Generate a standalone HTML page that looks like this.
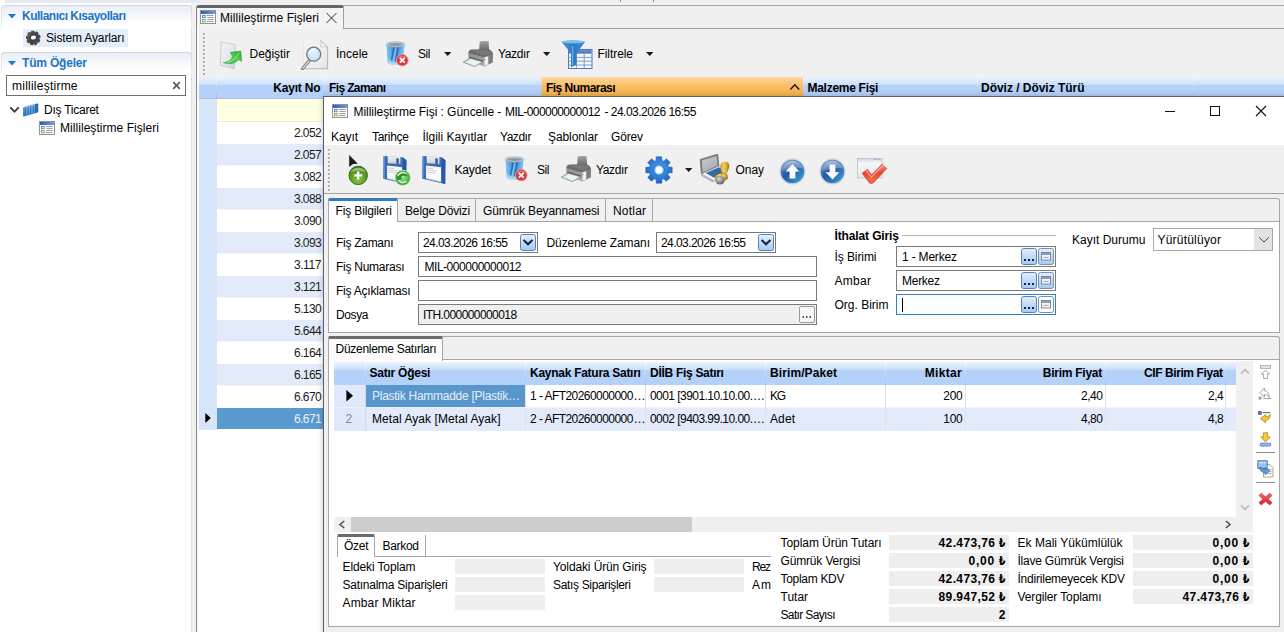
<!DOCTYPE html>
<html lang="tr">
<head>
<meta charset="utf-8">
<title>Millileştirme Fişi</title>
<style>
html,body{margin:0;padding:0}
body{width:1284px;height:632px;position:relative;overflow:hidden;background:#f0f0f0;font:12px/14px "Liberation Sans","DejaVu Sans",sans-serif;color:#000}
.a{position:absolute;display:block}
.t{position:absolute;white-space:nowrap;font:12px/14px "Liberation Sans","DejaVu Sans",sans-serif}
.b{font-weight:bold}
</style>
</head>
<body>
<div class="a" style="left:0px;top:0px;width:192px;height:632px;background:#ffffff;"></div>
<div class="a" style="left:5px;top:0px;width:196px;height:3px;background:#e5e9f0;"></div>
<div class="a" style="left:191px;top:4px;width:1px;height:628px;background:#dcdfe4;"></div>
<div class="a" style="left:1px;top:5px;width:191px;height:23px;border-radius:4px 4px 0 0;background:linear-gradient(#cdd5e2,#dfe5ee 50%,#eef1f6 100%)"></div>
<div class="a" style="left:2px;top:6px;width:189px;height:22px;border-radius:3px 3px 0 0;background:linear-gradient(#e9eef6,#f5f7fb 45%,#ffffff 80%)"></div>
<svg class="a" style="left:8px;top:14px;" width="8" height="5" viewBox="0 0 8 5"><path d="M0 0H8L4 4.4Z" fill="#1b7bd1"/></svg>
<span class="t b" style="left:22px;top:9px;color:#1c74c4;letter-spacing:-0.50px;">Kullanıcı Kısayolları</span>
<div class="a" style="left:23px;top:29px;width:105px;height:18px;background:#e4eef9;"></div>
<svg class="a" style="left:25px;top:30px;" width="17" height="16" viewBox="0 0 17 16"><defs><linearGradient id="sg1" x1="0" y1="0" x2="1" y2="1"><stop offset="0" stop-color="#6a6a6a"/><stop offset=".5" stop-color="#3e3e3e"/><stop offset="1" stop-color="#565656"/></linearGradient></defs><g transform="rotate(-14 8.4 8.2)"><path d="M13.81 6.54 L15.12 6.94 L15.12 9.06 L13.81 9.46 L13.46 10.43 L14.21 11.57 L12.84 13.20 L11.59 12.66 L10.69 13.17 L10.53 14.53 L8.44 14.90 L7.82 13.68 L6.81 13.50 L5.81 14.44 L3.97 13.37 L4.28 12.04 L3.62 11.25 L2.26 11.33 L1.53 9.33 L2.62 8.52 L2.62 7.48 L1.53 6.67 L2.26 4.67 L3.62 4.75 L4.28 3.96 L3.97 2.63 L5.81 1.56 L6.81 2.50 L7.82 2.32 L8.44 1.10 L10.53 1.47 L10.69 2.83 L11.59 3.34 L12.84 2.80 L14.21 4.43 L13.46 5.57Z" fill="url(#sg1)" stroke="#4a4a4a" stroke-width="1.0" stroke-linejoin="round"/><ellipse cx="8.6" cy="7.6" rx="3.2" ry="2.6" fill="#f4f7fb" stroke="#2e2e2e" stroke-width=".9"/></g></svg>
<span class="t" style="left:46px;top:31px;letter-spacing:-0.14px;">Sistem Ayarları</span>
<div class="a" style="left:1px;top:52px;width:191px;height:22px;border-radius:4px 4px 0 0;background:linear-gradient(#cdd5e2,#dfe5ee 50%,#eef1f6 100%)"></div>
<div class="a" style="left:2px;top:53px;width:189px;height:21px;border-radius:3px 3px 0 0;background:linear-gradient(#e9eef6,#f5f7fb 45%,#ffffff 80%)"></div>
<svg class="a" style="left:8px;top:61px;" width="8" height="5" viewBox="0 0 8 5"><path d="M0 0H8L4 4.4Z" fill="#1b7bd1"/></svg>
<span class="t b" style="left:22px;top:56px;color:#1c74c4;letter-spacing:-0.19px;">Tüm Öğeler</span>
<div class="a" style="left:6px;top:75px;width:178px;height:19px;border:1px solid #6f6f6f;background:#fff"></div>
<span class="t" style="left:12px;top:79px;letter-spacing:0.24px;">millileştirme</span>
<svg class="a" style="left:172px;top:81px;" width="9" height="9" viewBox="0 0 9 9"><path d="M1.2 1.2L7.8 7.8M7.8 1.2L1.2 7.8" stroke="#5b5b5b" stroke-width="1.7" fill="none"/></svg>
<svg class="a" style="left:9px;top:106px;" width="11" height="8" viewBox="0 0 11 8"><path d="M1.3 1.4L5.5 5.6L9.7 1.4" stroke="#3c3c3c" stroke-width="1.9" fill="none"/></svg>
<svg class="a" style="left:22px;top:102px;" width="17" height="15" viewBox="0 0 17 15"><defs><linearGradient id="cg1" x1="0" y1="0" x2="0" y2="1"><stop offset="0" stop-color="#7fbdf0"/><stop offset=".5" stop-color="#4a95d6"/><stop offset="1" stop-color="#2f78bd"/></linearGradient></defs><path d="M1 6.2Q1 5.4 1.8 5.1L12.4 1.9Q13.2 1.7 13.2 2.5V10.6Q13.2 11.2 12.4 11.5L1.8 14.4Q1 14.6 1 13.8Z" fill="url(#cg1)"/><path d="M13 2L15.6 1.4Q16.3 1.3 16.3 2V9.4Q16.3 10 15.7 10.3L13 11.4Z" fill="#2a6cb0"/><path d="M1.6 5.2L12.6 1.9L15.6 1.3L5 4Z" fill="#b7dbf7"/><path d="M3.6 6.2V12.6M6.2 5.4V11.9M8.8 4.6V11.2M11.2 3.9V10.5" stroke="#2264a6" stroke-width="1.1" opacity=".85"/><path d="M4.8 5.8V12.2M7.4 5V11.5M10 4.2V10.8" stroke="#a9d4f6" stroke-width=".7" opacity=".8"/></svg>
<span class="t" style="left:44px;top:103px;letter-spacing:-0.24px;">Dış Ticaret</span>
<svg class="a" style="left:39px;top:121px;" width="16" height="14" viewBox="0 0 16 14"><defs><linearGradient id="fia" x1="0" y1="0" x2="1" y2="0"><stop offset="0" stop-color="#2c5fb5"/><stop offset="1" stop-color="#6d9be0"/></linearGradient></defs><rect x="0.5" y="0.5" width="15" height="13" fill="#fdfdfd" stroke="#8f9399"/><rect x="1" y="1" width="14" height="3" fill="url(#fia)"/><rect x="2.5" y="5.4" width="2.6" height="2.3" fill="#f2f6fc" stroke="#4f7fc6" stroke-width=".9"/><rect x="2.5" y="9.5" width="2.6" height="2.3" fill="#f3f9e6" stroke="#86ad3e" stroke-width=".9"/><path d="M6.6 5.5H13.6M7.4 7.5H13.6M7.4 9.5H13.6M6.6 11.5H13.6" stroke="#858585" stroke-width=".8"/></svg>
<span class="t" style="left:60px;top:121px;letter-spacing:0.05px;">Millileştirme Fişleri</span>
<div class="a" style="left:343px;top:5px;width:941px;height:1px;background:#a6a6a6;"></div>
<div class="a" style="left:620px;top:0px;width:1px;height:2px;background:#8c8c8c;"></div>
<div class="a" style="left:653px;top:0px;width:1px;height:2px;background:#8c8c8c;"></div>
<div class="a" style="left:343px;top:28px;width:941px;height:1px;background:#a0a0a0;"></div>
<div class="a" style="left:196px;top:5px;width:148px;height:24px;background:#f3f3f3;border-left:1px solid #858585;border-right:1px solid #a0a0a0;border-top:3px solid #666;border-radius:3px 3px 0 0;box-sizing:border-box"></div>
<div class="a" style="left:196px;top:28px;width:1px;height:604px;background:#8a8a8a;"></div>
<svg class="a" style="left:200px;top:10px;" width="16" height="14" viewBox="0 0 16 14"><defs><linearGradient id="fib" x1="0" y1="0" x2="1" y2="0"><stop offset="0" stop-color="#2c5fb5"/><stop offset="1" stop-color="#6d9be0"/></linearGradient></defs><rect x="0.5" y="0.5" width="15" height="13" fill="#fdfdfd" stroke="#8f9399"/><rect x="1" y="1" width="14" height="3" fill="url(#fib)"/><rect x="2.5" y="5.4" width="2.6" height="2.3" fill="#f2f6fc" stroke="#4f7fc6" stroke-width=".9"/><rect x="2.5" y="9.5" width="2.6" height="2.3" fill="#f3f9e6" stroke="#86ad3e" stroke-width=".9"/><path d="M6.6 5.5H13.6M7.4 7.5H13.6M7.4 9.5H13.6M6.6 11.5H13.6" stroke="#858585" stroke-width=".8"/></svg>
<span class="t" style="left:220px;top:11px;letter-spacing:0.05px;">Millileştirme Fişleri</span>
<svg class="a" style="left:325px;top:12px;" width="13" height="12" viewBox="0 0 13 12"><path d="M1.5 1L11.5 11M11.5 1L1.5 11" stroke="#2a2a2a" stroke-width="1" fill="none"/></svg>
<div class="a" style="left:204px;top:34px;width:2px;height:44px;background:repeating-linear-gradient(#fbfbfb 0 2px,rgba(255,255,255,0) 2px 4px)"></div>
<div class="a" style="left:203px;top:33px;width:2px;height:44px;background:repeating-linear-gradient(#adadad 0 2px,rgba(255,255,255,0) 2px 4px)"></div>
<svg class="a" style="left:219px;top:41px;" width="25" height="29" viewBox="0 0 25 29"><defs><linearGradient id="g1" x1="0" y1="0" x2="1" y2="1"><stop offset="0" stop-color="#f1f3f6"/><stop offset=".6" stop-color="#e3e7ed"/><stop offset="1" stop-color="#c9cdd3"/></linearGradient><linearGradient id="g2" x1="0" y1="1" x2="1" y2="0"><stop offset="0" stop-color="#3fc043"/><stop offset=".55" stop-color="#4fcf4f"/><stop offset="1" stop-color="#2f9a3a"/></linearGradient></defs><path d="M2.1 1L16.4 3.5L15.5 27.8L1.3 24.3Z" fill="url(#g1)" stroke="#c2c6cc" stroke-width=".8" stroke-linejoin="round"/><path d="M4.2 21.6C9 21.4 12.4 18.6 13.4 15.6L11.2 11.2L21.8 10.1L22.9 20.4L19.2 18.8C16.4 22.6 10 24 4.2 21.6Z" fill="url(#g2)" stroke="#3a9c40" stroke-width=".5" stroke-linejoin="round"/><path d="M8 21.4C13.4 20.4 17.6 16.6 20.2 11.6" stroke="#c9f5c2" stroke-width=".9" fill="none" opacity=".85"/></svg>
<span class="t" style="left:249.5px;top:47px;letter-spacing:-0.03px;">Değiştir</span>
<svg class="a" style="left:300px;top:40px;" width="29" height="30" viewBox="0 0 29 30"><defs><linearGradient id="g3" x1="0" y1="0" x2="1" y2="1"><stop offset="0" stop-color="#f4f4f4"/><stop offset=".8" stop-color="#ebebec"/><stop offset="1" stop-color="#d9d9ee"/></linearGradient><radialGradient id="g4" cx=".45" cy=".4" r=".7"><stop offset="0" stop-color="#e6f2fc"/><stop offset="1" stop-color="#c2dcf4"/></radialGradient></defs><path d="M3.6 0.6H20.6L27.6 6.8V28.8H3.6Z" fill="url(#g3)"/><path d="M3.6 0.6V28.8" stroke="#e2e2e2" stroke-width=".8" fill="none"/><path d="M20.6 0.6L27.6 6.8V28.8H4.6" stroke="#b4b4b6" stroke-width="1" fill="none"/><path d="M20.8 0.8V6.8H27.4Z" fill="#f7f7f7" stroke="#c4c4c6" stroke-width=".8"/><path d="M9.6 20.2L2.6 28.6" stroke="#6e6e6e" stroke-width="3" stroke-linecap="round"/><path d="M9.4 20.6L2.8 28.4" stroke="#ececec" stroke-width="1.2" stroke-linecap="round"/><circle cx="13.7" cy="14.2" r="7" fill="url(#g4)" stroke="#707478" stroke-width="1.3"/><path d="M9.4 13Q11.4 9.2 15.4 9" stroke="#fff" stroke-width="1.4" fill="none" opacity=".9"/></svg>
<span class="t" style="left:336px;top:47px;">İncele</span>
<svg class="a" style="left:385px;top:41px;" width="25" height="27" viewBox="0 0 25 27"><defs><linearGradient id="g5" x1="0" y1="0" x2="1" y2="0"><stop offset="0" stop-color="#7cc0ee"/><stop offset=".3" stop-color="#3f92dc"/><stop offset=".55" stop-color="#2f7fd0"/><stop offset=".8" stop-color="#4fa2e2"/><stop offset="1" stop-color="#86c4ee"/></linearGradient><linearGradient id="g6" x1="0" y1="0" x2="0" y2="1"><stop offset="0" stop-color="#fff" stop-opacity="0"/><stop offset=".6" stop-color="#6fd0f0" stop-opacity=".35"/><stop offset="1" stop-color="#e8f2f8" stop-opacity=".9"/></linearGradient></defs><path d="M1.4 3.4L2.8 22.6Q10.2 25.4 17.6 22.6L19.6 3.4Z" fill="url(#g5)"/><path d="M1.4 3.4L2.8 22.6Q10.2 25.4 17.6 22.6L19.6 3.4Z" fill="url(#g6)"/><path d="M9 6.4L6.6 19.4M13.4 6.4L10.4 20.4" stroke="#2463b4" stroke-width="1.6" opacity=".8"/><path d="M11 6.4L8.6 19" stroke="#bfe2f8" stroke-width="1.2" opacity=".55"/><ellipse cx="10.5" cy="3.4" rx="9.3" ry="2.5" fill="#d6dde4" stroke="#98a2ac" stroke-width=".8"/><ellipse cx="10.5" cy="3.5" rx="7.6" ry="1.5" fill="#8796a4"/><circle cx="17.3" cy="19.2" r="5.9" fill="#d93a40" stroke="#e9b0b2" stroke-width=".7"/><path d="M13.6 17A4.6 4.6 0 0 1 21 17" fill="none" stroke="#f4a6a8" stroke-width="1.2" opacity=".6"/><path d="M14.9 16.8L19.7 21.6M19.7 16.8L14.9 21.6" stroke="#fdf4f4" stroke-width="1.9"/></svg>
<span class="t" style="left:418px;top:47px;letter-spacing:-0.42px;">Sil</span>
<svg class="a" style="left:443.5px;top:52px;" width="8" height="4" viewBox="0 0 8 4"><path d="M0 0H7.4L3.7 4Z" fill="#1a1a1a"/></svg>
<svg class="a" style="left:462px;top:40px;" width="32" height="28" viewBox="0 0 32 28"><defs><linearGradient id="g7" x1="0" y1="0" x2="0" y2="1"><stop offset="0" stop-color="#a2a2a2"/><stop offset="1" stop-color="#666"/></linearGradient><linearGradient id="g8" x1="0" y1="0" x2="0" y2="1"><stop offset="0" stop-color="#8e8e8e"/><stop offset="1" stop-color="#b2b2b2"/></linearGradient><linearGradient id="g9" x1="0" y1="0" x2="1" y2="1"><stop offset="0" stop-color="#c9dcdf"/><stop offset="1" stop-color="#e9f2f3"/></linearGradient></defs><path d="M17.8 1.4Q22 0.6 26.6 1.2L27.2 10.6L17 10.8Z" fill="url(#g7)"/><path d="M6.4 12Q6.8 9.8 9.6 9.5L26 9.2Q29.8 10 31 13.4L30.8 15L22 17.8L6.4 13.6Z" fill="#6b6b6b"/><path d="M9 10.6L25.6 10.2Q28 10.8 29.4 13L22.4 15.6Z" fill="#7d7d7d" opacity=".8"/><path d="M6.4 13L22 17.4V26.4L6.4 20.6Z" fill="url(#g8)"/><path d="M7.4 16.4L21 20.6V22.2L7.4 17.8Z" fill="#565656"/><path d="M22 17.4L26.4 15.8V24.6L22 26.4Z" fill="#dedede" stroke="#9a9a9a" stroke-width=".5"/><path d="M23.4 17.6L25.4 16.9V24.2L23.4 25Z" fill="#f8f8f8"/><path d="M26.4 15.8L31 13.6L30.8 22.4L26.4 24.6Z" fill="#7e7e7e"/><circle cx="22.8" cy="19.6" r=".6" fill="#555"/><path d="M8.2 18.2L1.2 22.2L12.6 26.6L20.8 21.8Z" fill="url(#g9)" stroke="#83888a" stroke-width=".8" stroke-linejoin="round"/><path d="M8.6 19.4L4.2 22L12.4 25L17.8 21.8Z" fill="#eef6f7" opacity=".8"/></svg>
<span class="t" style="left:498px;top:47px;letter-spacing:-0.36px;">Yazdır</span>
<svg class="a" style="left:542.5px;top:52px;" width="8" height="4" viewBox="0 0 8 4"><path d="M0 0H7.4L3.7 4Z" fill="#1a1a1a"/></svg>
<svg class="a" style="left:561px;top:40px;" width="32" height="29" viewBox="0 0 32 29"><defs><linearGradient id="g10" x1="0" y1="0" x2="1" y2="0"><stop offset="0" stop-color="#4a98da"/><stop offset=".5" stop-color="#2d78c2"/><stop offset="1" stop-color="#3f8ed4"/></linearGradient><linearGradient id="g11" x1="0" y1="0" x2="0" y2="1"><stop offset="0" stop-color="#6f97d6"/><stop offset="1" stop-color="#3f6fbc"/></linearGradient></defs><rect x="7.5" y="9.5" width="23.5" height="19" fill="#f7f9fd" stroke="#4a78bf"/><rect x="8" y="10" width="22.5" height="3.6" fill="url(#g11)"/><path d="M7.5 17.4H31M7.5 21.2H31M7.5 25H31M15.4 13.6V28.5M23.2 9.5V28.5" stroke="#5f88c8" stroke-width=".8"/><path d="M0.4 1.8Q12.2 -0.8 24.2 1.8L15.6 13.2V24.6L10 27.4V13.2Z" fill="url(#g10)"/><ellipse cx="12.3" cy="1.9" rx="11.3" ry="1.5" fill="#7fbdec"/><path d="M11.6 6V25.6" stroke="#8ec8f2" stroke-width="1.2" opacity=".7"/></svg>
<span class="t" style="left:597.5px;top:47px;letter-spacing:-0.07px;">Filtrele</span>
<svg class="a" style="left:645.5px;top:52px;" width="8" height="4" viewBox="0 0 8 4"><path d="M0 0H7.4L3.7 4Z" fill="#1a1a1a"/></svg>
<div class="a" style="left:197px;top:29px;width:2px;height:603px;background:#fafafa;"></div>
<div class="a" style="left:199px;top:77px;width:1085px;height:555px;background:#ffffff;"></div>
<div class="a" style="left:199px;top:77px;width:1085px;height:21px;background:linear-gradient(#eaf2fd 0,#c9defb 8px,#b4d1fa 8.5px,#b4d1fa 100%)"></div>
<div class="a" style="left:199px;top:98px;width:1085px;height:1px;background:#aebfd6;"></div>
<div class="a" style="left:541px;top:77px;width:262px;height:21px;background:linear-gradient(#fcd8a4 0,#f9bd62 9px,#f6b04a 100%)"></div>
<div class="a" style="left:216px;top:78px;width:1px;height:20px;background:linear-gradient(rgba(255,255,255,.6),rgba(150,175,215,.55))"></div>
<div class="a" style="left:324px;top:78px;width:1px;height:20px;background:linear-gradient(rgba(255,255,255,.6),rgba(150,175,215,.55))"></div>
<div class="a" style="left:541px;top:78px;width:1px;height:20px;background:linear-gradient(rgba(255,255,255,.6),rgba(150,175,215,.55))"></div>
<div class="a" style="left:803px;top:78px;width:1px;height:20px;background:linear-gradient(rgba(255,255,255,.6),rgba(150,175,215,.55))"></div>
<div class="a" style="left:977px;top:78px;width:1px;height:20px;background:linear-gradient(rgba(255,255,255,.6),rgba(150,175,215,.55))"></div>
<div class="a" style="left:1193px;top:78px;width:1px;height:20px;background:linear-gradient(rgba(255,255,255,.6),rgba(150,175,215,.55))"></div>
<span class="t b" style="right:963.5px;top:81px;letter-spacing:-0.17px;">Kayıt No</span>
<span class="t b" style="left:329px;top:81px;letter-spacing:-0.63px;">Fiş Zamanı</span>
<span class="t b" style="left:546px;top:81px;letter-spacing:-0.53px;">Fiş Numarası</span>
<svg class="a" style="left:789px;top:83px;" width="12" height="8" viewBox="0 0 12 8"><path d="M1.4 6.6L5.8 1.8L10.2 6.6" stroke="#1a1a1a" stroke-width="1.5" fill="none"/></svg>
<span class="t b" style="left:807.5px;top:81px;letter-spacing:-0.28px;">Malzeme Fişi</span>
<span class="t b" style="left:981px;top:81px;letter-spacing:-0.03px;">Döviz / Döviz Türü</span>
<div class="a" style="left:199px;top:99px;width:18px;height:331px;background:#d7e5fa;"></div>
<div class="a" style="left:217px;top:99px;width:1067px;height:22px;background:#ffffe1;"></div>
<div class="a" style="left:217px;top:121px;width:1067px;height:1px;background:#ecebd6;"></div>
<span class="t" style="right:963px;top:126px;color:#1a1a1a;letter-spacing:-0.63px;">2.052</span>
<div class="a" style="left:217px;top:144px;width:1067px;height:21px;background:#e3ebfb;"></div>
<div class="a" style="left:217px;top:165px;width:1067px;height:1px;background:#f1f5fd;"></div>
<span class="t" style="right:963px;top:148px;color:#1a1a1a;letter-spacing:-0.63px;">2.057</span>
<span class="t" style="right:963px;top:170px;color:#1a1a1a;letter-spacing:-0.63px;">3.082</span>
<div class="a" style="left:217px;top:188px;width:1067px;height:21px;background:#e3ebfb;"></div>
<div class="a" style="left:217px;top:209px;width:1067px;height:1px;background:#f1f5fd;"></div>
<span class="t" style="right:963px;top:192px;color:#1a1a1a;letter-spacing:-0.63px;">3.088</span>
<span class="t" style="right:963px;top:214px;color:#1a1a1a;letter-spacing:-0.63px;">3.090</span>
<div class="a" style="left:217px;top:232px;width:1067px;height:21px;background:#e3ebfb;"></div>
<div class="a" style="left:217px;top:253px;width:1067px;height:1px;background:#f1f5fd;"></div>
<span class="t" style="right:963px;top:236px;color:#1a1a1a;letter-spacing:-0.63px;">3.093</span>
<span class="t" style="right:963px;top:258px;color:#1a1a1a;letter-spacing:-0.41px;">3.117</span>
<div class="a" style="left:217px;top:276px;width:1067px;height:21px;background:#e3ebfb;"></div>
<div class="a" style="left:217px;top:297px;width:1067px;height:1px;background:#f1f5fd;"></div>
<span class="t" style="right:963px;top:280px;color:#1a1a1a;letter-spacing:-0.63px;">3.121</span>
<span class="t" style="right:963px;top:302px;color:#1a1a1a;letter-spacing:-0.63px;">5.130</span>
<div class="a" style="left:217px;top:320px;width:1067px;height:21px;background:#e3ebfb;"></div>
<div class="a" style="left:217px;top:341px;width:1067px;height:1px;background:#f1f5fd;"></div>
<span class="t" style="right:963px;top:324px;color:#1a1a1a;letter-spacing:-0.63px;">5.644</span>
<span class="t" style="right:963px;top:346px;color:#1a1a1a;letter-spacing:-0.63px;">6.164</span>
<div class="a" style="left:217px;top:364px;width:1067px;height:21px;background:#e3ebfb;"></div>
<div class="a" style="left:217px;top:385px;width:1067px;height:1px;background:#f1f5fd;"></div>
<span class="t" style="right:963px;top:368px;color:#1a1a1a;letter-spacing:-0.63px;">6.165</span>
<span class="t" style="right:963px;top:390px;color:#1a1a1a;letter-spacing:-0.63px;">6.670</span>
<div class="a" style="left:217px;top:408px;width:1067px;height:21px;background:#5a9ad0;"></div>
<svg class="a" style="left:205px;top:413px;" width="6" height="10" viewBox="0 0 6 10"><path d="M0.3 0L5.8 5L0.3 10Z" fill="#000"/></svg>
<span class="t" style="right:963px;top:412px;color:#eaf3fb;letter-spacing:-0.63px;">6.671</span>
<div class="a" style="left:323px;top:96px;width:970px;height:545px;background:#f0f0f0;border:1px solid #5c6066;box-shadow:0 0 6px rgba(0,0,0,.22)"></div>
<div class="a" style="left:324px;top:97px;width:960px;height:48px;background:#ffffff;"></div>
<svg class="a" style="left:332px;top:104px;" width="16" height="14" viewBox="0 0 16 14"><defs><linearGradient id="fic" x1="0" y1="0" x2="1" y2="0"><stop offset="0" stop-color="#2c5fb5"/><stop offset="1" stop-color="#6d9be0"/></linearGradient></defs><rect x="0.5" y="0.5" width="15" height="13" fill="#fdfdfd" stroke="#8f9399"/><rect x="1" y="1" width="14" height="3" fill="url(#fic)"/><rect x="2.5" y="5.4" width="2.6" height="2.3" fill="#f2f6fc" stroke="#4f7fc6" stroke-width=".9"/><rect x="2.5" y="9.5" width="2.6" height="2.3" fill="#f3f9e6" stroke="#86ad3e" stroke-width=".9"/><path d="M6.6 5.5H13.6M7.4 7.5H13.6M7.4 9.5H13.6M6.6 11.5H13.6" stroke="#858585" stroke-width=".8"/></svg>
<span class="t" style="left:353.5px;top:104.5px;letter-spacing:-0.05px;">Millileştirme Fişi : Güncelle -</span>
<span class="t" style="left:505px;top:104.5px;letter-spacing:-0.57px;">MIL-000000000012</span>
<span class="t" style="left:604.5px;top:104.5px;letter-spacing:-0.52px;">- 24.03.2026 16:55</span>
<svg class="a" style="left:1164px;top:110px;" width="12" height="3" viewBox="0 0 12 3"><path d="M1 1.5H11" stroke="#111" stroke-width="1"/></svg>
<svg class="a" style="left:1209px;top:105px;" width="12" height="12" viewBox="0 0 12 12"><rect x="1.5" y="1.5" width="9" height="9" fill="none" stroke="#111" stroke-width="1"/></svg>
<svg class="a" style="left:1255px;top:105px;" width="12" height="12" viewBox="0 0 12 12"><path d="M1 1L11 11M11 1L1 11" stroke="#111" stroke-width="1.1"/></svg>
<span class="t" style="left:331px;top:130px;letter-spacing:-0.09px;">Kayıt</span>
<span class="t" style="left:372px;top:130px;letter-spacing:-0.28px;">Tarihçe</span>
<span class="t" style="left:422.5px;top:130px;">İlgili Kayıtlar</span>
<span class="t" style="left:500px;top:130px;letter-spacing:-0.46px;">Yazdır</span>
<span class="t" style="left:548px;top:130px;letter-spacing:-0.09px;">Şablonlar</span>
<span class="t" style="left:611px;top:130px;letter-spacing:-0.17px;">Görev</span>
<div class="a" style="left:329px;top:150px;width:2px;height:44px;background:repeating-linear-gradient(#fbfbfb 0 2px,rgba(255,255,255,0) 2px 4px)"></div>
<div class="a" style="left:328px;top:149px;width:2px;height:44px;background:repeating-linear-gradient(#adadad 0 2px,rgba(255,255,255,0) 2px 4px)"></div>
<svg class="a" style="left:346px;top:153px;" width="24" height="33" viewBox="0 0 24 33"><defs><radialGradient id="g12" cx=".5" cy=".75" r=".75"><stop offset="0" stop-color="#86c43e"/><stop offset=".6" stop-color="#5a9e25"/><stop offset="1" stop-color="#386f14"/></radialGradient></defs><path d="M2.7 1V15L6.5 11.8L12.6 11Z" fill="#1c1c1c" stroke="#fbfbfb" stroke-width="1" stroke-linejoin="round"/><circle cx="12.2" cy="22.4" r="9.2" fill="url(#g12)" stroke="#356a18" stroke-width="1"/><path d="M4.6 19.6A8 7 0 0 1 19.8 19.6Q12.2 15.4 4.6 19.6Z" fill="#d6ecc0" opacity=".55"/><path d="M12.2 18.4V26.4M8.2 22.4H16.2" stroke="#fff" stroke-width="2.2"/></svg>
<svg class="a" style="left:382px;top:155px;" width="30" height="32" viewBox="0 0 30 32"><defs><linearGradient id="g14" x1="0" y1="0" x2="0" y2="1"><stop offset="0" stop-color="#f2f2f2"/><stop offset="1" stop-color="#cfcfcf"/></linearGradient></defs><path d="M1.6 1L20.6 2.2L24.4 5.2L24.2 28.9L1.3 23.8Z" fill="#3a6db6"/><path d="M20.9 2.4L24.4 5.2L24.2 28.9L21.4 28.3Z" fill="#2a579e"/><path d="M1.6 1L3 1.1L2.7 24.1L1.3 23.8Z" fill="#5c8fd4"/><path d="M5.7 0.9L18.4 2V9L5.7 8.3Z" fill="url(#g14)"/><path d="M14.3 3.2L16.8 3.4V8.9L14.3 8.75Z" fill="#2f5ea6"/><path d="M5.1 10.5L20 12.2V27L5.1 23.6Z" fill="#fafbfd"/><path d="M5.1 23.6L20 27" stroke="#9ab8e4" stroke-width=".8"/><path d="M6.2 12.9L12 13.6M6.2 15L16 16.2M6.2 17.1L14.4 18.2" stroke="#c8b4ac" stroke-width=".7"/><defs><radialGradient id="g13" cx=".5" cy=".45" r=".6"><stop offset="0" stop-color="#a6e79c"/><stop offset=".55" stop-color="#57c24e"/><stop offset="1" stop-color="#2f962c"/></radialGradient></defs><circle cx="20.7" cy="22.8" r="7.7" fill="url(#g13)" stroke="#dcebd8" stroke-width=".7"/><path d="M16 24.6A4.9 4.9 0 1 0 18.4 18.6" fill="none" stroke="#e9f8e4" stroke-width="1.5" opacity=".9" transform="rotate(160 20.7 22.8)"/><path d="M24.2 21.6C22.6 19.8 19.8 20.4 18.8 22.6L20.6 23.6L15.4 25.4L14.6 20.2L16.6 21.4C18.4 18 23 17.6 25.6 20.4Z" fill="#2c8a2c"/></svg>
<svg class="a" style="left:421px;top:155px;" width="26" height="30" viewBox="0 0 26 30"><defs><linearGradient id="g15" x1="0" y1="0" x2="0" y2="1"><stop offset="0" stop-color="#f2f2f2"/><stop offset="1" stop-color="#cfcfcf"/></linearGradient></defs><path d="M1.6 1L20.6 2.2L24.4 5.2L24.2 28.9L1.3 23.8Z" fill="#3a6db6"/><path d="M20.9 2.4L24.4 5.2L24.2 28.9L21.4 28.3Z" fill="#2a579e"/><path d="M1.6 1L3 1.1L2.7 24.1L1.3 23.8Z" fill="#5c8fd4"/><path d="M5.7 0.9L18.4 2V9L5.7 8.3Z" fill="url(#g15)"/><path d="M14.3 3.2L16.8 3.4V8.9L14.3 8.75Z" fill="#2f5ea6"/><path d="M5.1 10.5L20 12.2V27L5.1 23.6Z" fill="#fafbfd"/><path d="M5.1 23.6L20 27" stroke="#9ab8e4" stroke-width=".8"/><path d="M6.2 12.9L12 13.6M6.2 15L16 16.2M6.2 17.1L14.4 18.2" stroke="#c8b4ac" stroke-width=".7"/></svg>
<span class="t" style="left:454.5px;top:163px;letter-spacing:-0.17px;">Kaydet</span>
<svg class="a" style="left:504px;top:156px;" width="25" height="27" viewBox="0 0 25 27"><defs><linearGradient id="g16" x1="0" y1="0" x2="1" y2="0"><stop offset="0" stop-color="#7cc0ee"/><stop offset=".3" stop-color="#3f92dc"/><stop offset=".55" stop-color="#2f7fd0"/><stop offset=".8" stop-color="#4fa2e2"/><stop offset="1" stop-color="#86c4ee"/></linearGradient><linearGradient id="g17" x1="0" y1="0" x2="0" y2="1"><stop offset="0" stop-color="#fff" stop-opacity="0"/><stop offset=".6" stop-color="#6fd0f0" stop-opacity=".35"/><stop offset="1" stop-color="#e8f2f8" stop-opacity=".9"/></linearGradient></defs><path d="M1.4 3.4L2.8 22.6Q10.2 25.4 17.6 22.6L19.6 3.4Z" fill="url(#g16)"/><path d="M1.4 3.4L2.8 22.6Q10.2 25.4 17.6 22.6L19.6 3.4Z" fill="url(#g17)"/><path d="M9 6.4L6.6 19.4M13.4 6.4L10.4 20.4" stroke="#2463b4" stroke-width="1.6" opacity=".8"/><path d="M11 6.4L8.6 19" stroke="#bfe2f8" stroke-width="1.2" opacity=".55"/><ellipse cx="10.5" cy="3.4" rx="9.3" ry="2.5" fill="#d6dde4" stroke="#98a2ac" stroke-width=".8"/><ellipse cx="10.5" cy="3.5" rx="7.6" ry="1.5" fill="#8796a4"/><circle cx="17.3" cy="19.2" r="5.9" fill="#d93a40" stroke="#e9b0b2" stroke-width=".7"/><path d="M13.6 17A4.6 4.6 0 0 1 21 17" fill="none" stroke="#f4a6a8" stroke-width="1.2" opacity=".6"/><path d="M14.9 16.8L19.7 21.6M19.7 16.8L14.9 21.6" stroke="#fdf4f4" stroke-width="1.9"/></svg>
<span class="t" style="left:537px;top:163px;letter-spacing:-0.42px;">Sil</span>
<svg class="a" style="left:560px;top:155px;" width="32" height="28" viewBox="0 0 32 28"><defs><linearGradient id="g18" x1="0" y1="0" x2="0" y2="1"><stop offset="0" stop-color="#a2a2a2"/><stop offset="1" stop-color="#666"/></linearGradient><linearGradient id="g19" x1="0" y1="0" x2="0" y2="1"><stop offset="0" stop-color="#8e8e8e"/><stop offset="1" stop-color="#b2b2b2"/></linearGradient><linearGradient id="g20" x1="0" y1="0" x2="1" y2="1"><stop offset="0" stop-color="#c9dcdf"/><stop offset="1" stop-color="#e9f2f3"/></linearGradient></defs><path d="M17.8 1.4Q22 0.6 26.6 1.2L27.2 10.6L17 10.8Z" fill="url(#g18)"/><path d="M6.4 12Q6.8 9.8 9.6 9.5L26 9.2Q29.8 10 31 13.4L30.8 15L22 17.8L6.4 13.6Z" fill="#6b6b6b"/><path d="M9 10.6L25.6 10.2Q28 10.8 29.4 13L22.4 15.6Z" fill="#7d7d7d" opacity=".8"/><path d="M6.4 13L22 17.4V26.4L6.4 20.6Z" fill="url(#g19)"/><path d="M7.4 16.4L21 20.6V22.2L7.4 17.8Z" fill="#565656"/><path d="M22 17.4L26.4 15.8V24.6L22 26.4Z" fill="#dedede" stroke="#9a9a9a" stroke-width=".5"/><path d="M23.4 17.6L25.4 16.9V24.2L23.4 25Z" fill="#f8f8f8"/><path d="M26.4 15.8L31 13.6L30.8 22.4L26.4 24.6Z" fill="#7e7e7e"/><circle cx="22.8" cy="19.6" r=".6" fill="#555"/><path d="M8.2 18.2L1.2 22.2L12.6 26.6L20.8 21.8Z" fill="url(#g20)" stroke="#83888a" stroke-width=".8" stroke-linejoin="round"/><path d="M8.6 19.4L4.2 22L12.4 25L17.8 21.8Z" fill="#eef6f7" opacity=".8"/></svg>
<span class="t" style="left:596px;top:163px;letter-spacing:-0.36px;">Yazdır</span>
<svg class="a" style="left:644.5px;top:156px;" width="28" height="28" viewBox="0 0 28 28"><defs><radialGradient id="g21" cx=".5" cy=".45" r=".6"><stop offset="0" stop-color="#4fa6ec"/><stop offset=".6" stop-color="#2c7cd2"/><stop offset="1" stop-color="#1d5cb2"/></radialGradient></defs><path d="M11.06 4.44 L11.26 0.78 L16.74 0.78 L16.94 4.44 L18.68 5.16 L21.41 2.72 L25.28 6.59 L22.84 9.32 L23.56 11.06 L27.22 11.26 L27.22 16.74 L23.56 16.94 L22.84 18.68 L25.28 21.41 L21.41 25.28 L18.68 22.84 L16.94 23.56 L16.74 27.22 L11.26 27.22 L11.06 23.56 L9.32 22.84 L6.59 25.28 L2.72 21.41 L5.16 18.68 L4.44 16.94 L0.78 16.74 L0.78 11.26 L4.44 11.06 L5.16 9.32 L2.72 6.59 L6.59 2.72 L9.32 5.16Z" fill="url(#g21)" stroke="#1f5fb4" stroke-width=".5" stroke-linejoin="round"/><circle cx="14" cy="14" r="5.6" fill="#1f62b8"/><circle cx="14" cy="14" r="4.9" fill="#86c4f2"/><circle cx="14" cy="14" r="3.5" fill="#ffffff"/></svg>
<svg class="a" style="left:685px;top:168px;" width="8" height="4" viewBox="0 0 8 4"><path d="M0 0H7.4L3.7 4Z" fill="#1a1a1a"/></svg>
<svg class="a" style="left:699px;top:154px;" width="33" height="32" viewBox="0 0 33 32"><defs><linearGradient id="g22" x1="0" y1="0" x2="1" y2="0"><stop offset="0" stop-color="#b98a1a"/><stop offset=".35" stop-color="#f3d060"/><stop offset=".7" stop-color="#d8aa30"/><stop offset="1" stop-color="#8c6a14"/></linearGradient><linearGradient id="g23" x1="0" y1="0" x2="1" y2="1"><stop offset="0" stop-color="#c9ccd0"/><stop offset="1" stop-color="#a4a8ad"/></linearGradient><radialGradient id="g24" cx=".4" cy=".35" r=".7"><stop offset="0" stop-color="#d6d6d6"/><stop offset="1" stop-color="#5c5c5c"/></radialGradient></defs><path d="M1.1 5.4L18.8 0L19.9 12L2.3 19.9Z" fill="#7a7d81" stroke="#66696d" stroke-width=".6" stroke-linejoin="round"/><path d="M2.8 6.4L17.6 1.9L18.4 11.6L3.7 18.2Z" fill="url(#g23)"/><path d="M2.3 19.9L19.9 12L29 17.2L14.8 26.8Z" fill="#f1f2f3" stroke="#8e9296" stroke-width=".7" stroke-linejoin="round"/><path d="M2.3 19.9L14.8 26.8V29L2.3 22Z" fill="#b3b6ba"/><path d="M6.8 19L19.9 13.3L26.6 17.2L14.6 23.6Z" fill="#2f6ca8"/><ellipse cx="22.4" cy="23.4" rx="6.6" ry="3.8" fill="url(#g22)"/><path d="M21.2 23C23.2 20.4 23 18.4 21.8 15.4C20.4 11 22.8 7.6 26 7.6C29.4 7.6 31.2 10.8 30 14.2C28.8 17.4 27 19 27.8 23Z" fill="url(#g22)"/><ellipse cx="21" cy="26.2" rx="4.8" ry="4.2" fill="url(#g24)"/><path d="M15.6 23.4A6.6 3.8 0 0 1 28.6 22" fill="none" stroke="#6b5210" stroke-width=".8" opacity=".7"/></svg>
<span class="t" style="left:735.5px;top:163px;letter-spacing:-0.06px;">Onay</span>
<svg class="a" style="left:778.5px;top:157.5px;" width="27" height="27" viewBox="0 0 27 27"><defs><linearGradient id="g25" x1="0" y1="0" x2="1" y2="1"><stop offset="0" stop-color="#5f8ac2"/><stop offset=".45" stop-color="#255aa2"/><stop offset="1" stop-color="#3aaedc"/></linearGradient><linearGradient id="g26" x1="0" y1="0" x2="0" y2="1"><stop offset="0" stop-color="#fff" stop-opacity=".6"/><stop offset="1" stop-color="#fff" stop-opacity=".05"/></linearGradient></defs><circle cx="13.5" cy="13.5" r="12.3" fill="url(#g25)" stroke="#c4cfde" stroke-width="1.4"/><path d="M2.2 14.6A11.4 11.4 0 0 1 24.4 10.4Q12 9 2.2 14.6Z" fill="url(#g26)"/><path d="M13.5 6.2L20.4 13.4H16.4V20.4H10.6V13.4H6.6Z" fill="#fafcff"/></svg>
<svg class="a" style="left:818.5px;top:157.5px;" width="27" height="27" viewBox="0 0 27 27"><defs><linearGradient id="g27" x1="0" y1="0" x2="1" y2="1"><stop offset="0" stop-color="#5f8ac2"/><stop offset=".45" stop-color="#255aa2"/><stop offset="1" stop-color="#3aaedc"/></linearGradient><linearGradient id="g28" x1="0" y1="0" x2="0" y2="1"><stop offset="0" stop-color="#fff" stop-opacity=".6"/><stop offset="1" stop-color="#fff" stop-opacity=".05"/></linearGradient></defs><circle cx="13.5" cy="13.5" r="12.3" fill="url(#g27)" stroke="#c4cfde" stroke-width="1.4"/><path d="M2.2 14.6A11.4 11.4 0 0 1 24.4 10.4Q12 9 2.2 14.6Z" fill="url(#g28)"/><path d="M13.5 21.4L20.4 14.2H16.4V6.6H10.6V14.2H6.6Z" fill="#fafcff"/></svg>
<svg class="a" style="left:857px;top:157px;" width="31" height="28" viewBox="0 0 31 28"><defs><linearGradient id="g29" x1="0" y1="0" x2="0" y2="1"><stop offset="0" stop-color="#cfd6e2"/><stop offset=".25" stop-color="#f5f6f8"/><stop offset="1" stop-color="#e4e6ea"/></linearGradient><linearGradient id="g30" x1="0" y1="0" x2="0" y2="1"><stop offset="0" stop-color="#f08a7c"/><stop offset=".5" stop-color="#e8452f"/><stop offset="1" stop-color="#f4694a"/></linearGradient></defs><rect x="0.5" y="1.5" width="24.5" height="19.5" fill="url(#g29)" stroke="#b9c0cc" stroke-width=".8"/><path d="M17 2.4H23" stroke="#8ea2c4" stroke-width="1" stroke-dasharray="1.4 1"/><path d="M7.6 14.2L14.4 23L27.6 9.2" fill="none" stroke="#c5392a" stroke-width="7" stroke-linejoin="round"/><path d="M7.6 14.2L14.4 23L27.6 9.2" fill="none" stroke="url(#g30)" stroke-width="5.8" stroke-linejoin="round"/><path d="M8.6 12.6L14.4 20L26.4 7.8" fill="none" stroke="#f9b9ac" stroke-width="1.3" opacity=".75"/></svg>
<div class="a" style="left:324px;top:193px;width:960px;height:1px;background:#a3a3a3;"></div>
<div class="a" style="left:328px;top:198px;width:950px;height:24px;border:1px solid #a6a6a6;border-bottom:none;border-radius:3px 3px 0 0;background:#f0f0f0"></div>
<div class="a" style="left:328px;top:221px;width:950px;height:110px;border:1px solid #a6a6a6;background:#fff"></div>
<div class="a" style="left:475px;top:199px;width:1px;height:22px;background:#a6a6a6;"></div>
<span class="t" style="left:405px;top:204px;letter-spacing:-0.15px;">Belge Dövizi</span>
<div class="a" style="left:605px;top:199px;width:1px;height:22px;background:#a6a6a6;"></div>
<span class="t" style="left:483px;top:204px;letter-spacing:-0.13px;">Gümrük Beyannamesi</span>
<div class="a" style="left:652px;top:199px;width:1px;height:22px;background:#a6a6a6;"></div>
<span class="t" style="left:613px;top:204px;letter-spacing:0.20px;">Notlar</span>
<div class="a" style="left:328px;top:198px;width:68px;height:24px;background:#fff;border-left:1px solid #a6a6a6;border-right:1px solid #a6a6a6;border-top:3px solid #2f7cc4;border-radius:2px 2px 0 0;box-sizing:content-box;height:21px"></div>
<span class="t" style="left:335.5px;top:204px;letter-spacing:-0.13px;">Fiş Bilgileri</span>
<span class="t" style="left:336px;top:236px;letter-spacing:-0.28px;">Fiş Zamanı</span>
<div class="a" style="left:418px;top:232px;width:118px;height:19px;border:1px solid #7a7a7a;background:#fff"></div>
<span class="t" style="left:423px;top:236px;letter-spacing:-0.56px;">24.03.2026 16:55</span>
<svg class="a" style="left:520px;top:234px;" width="16" height="17" viewBox="0 0 16 17"><defs><linearGradient id="g31" x1="0" y1="0" x2="0" y2="1"><stop offset="0" stop-color="#e6f0fc"/><stop offset=".5" stop-color="#c4dbf6"/><stop offset="1" stop-color="#a9c9f0"/></linearGradient></defs><rect x="0.5" y="0.5" width="15" height="16" rx="2" fill="url(#g31)" stroke="#5482bd"/><path d="M3.6 6L8 10.2L12.4 6" stroke="#14224a" stroke-width="2.1" fill="none"/></svg>
<span class="t" style="left:546.5px;top:236px;letter-spacing:-0.08px;">Düzenleme Zamanı</span>
<div class="a" style="left:656px;top:232px;width:118px;height:19px;border:1px solid #7a7a7a;background:#fff"></div>
<span class="t" style="left:661px;top:236px;letter-spacing:-0.56px;">24.03.2026 16:55</span>
<svg class="a" style="left:758px;top:234px;" width="16" height="17" viewBox="0 0 16 17"><defs><linearGradient id="g32" x1="0" y1="0" x2="0" y2="1"><stop offset="0" stop-color="#e6f0fc"/><stop offset=".5" stop-color="#c4dbf6"/><stop offset="1" stop-color="#a9c9f0"/></linearGradient></defs><rect x="0.5" y="0.5" width="15" height="16" rx="2" fill="url(#g32)" stroke="#5482bd"/><path d="M3.6 6L8 10.2L12.4 6" stroke="#14224a" stroke-width="2.1" fill="none"/></svg>
<span class="t" style="left:336px;top:260px;letter-spacing:-0.26px;">Fiş Numarası</span>
<div class="a" style="left:418px;top:256px;width:397px;height:19px;border:1px solid #7a7a7a;background:#fff"></div>
<span class="t" style="left:424.5px;top:260px;letter-spacing:-0.47px;">MIL-000000000012</span>
<span class="t" style="left:336px;top:284px;letter-spacing:-0.22px;">Fiş Açıklaması</span>
<div class="a" style="left:418px;top:280px;width:397px;height:19px;border:1px solid #7a7a7a;background:#fff"></div>
<span class="t" style="left:336px;top:308px;letter-spacing:-0.38px;">Dosya</span>
<div class="a" style="left:418px;top:304px;width:397px;height:19px;border:1px solid #7a7a7a;background:#f0f0f0"></div>
<span class="t" style="left:423px;top:308px;letter-spacing:-0.58px;">ITH.000000000018</span>
<div class="a" style="left:799px;top:306px;width:14px;height:15px;border:1px solid #9a9a9a;border-radius:2px;background:#f7f7f7"></div>
<svg class="a" style="left:802px;top:316px;" width="10" height="3" viewBox="0 0 10 3"><path d="M0.5 1H2M4 1H5.5M7.5 1H9" stroke="#222" stroke-width="1.4"/></svg>
<span class="t b" style="left:834.5px;top:228.5px;letter-spacing:-0.13px;">İthalat Giriş</span>
<div class="a" style="left:902px;top:235px;width:154px;height:1px;background:#b5b5b5;"></div>
<span class="t" style="left:834.5px;top:250px;letter-spacing:-0.08px;">İş Birimi</span>
<div class="a" style="left:896px;top:246px;width:158px;height:19px;border:1px solid #7a7a7a;background:#fff"></div>
<span class="t" style="left:902px;top:250px;letter-spacing:-0.19px;">1 - Merkez</span>
<svg class="a" style="left:1021px;top:248px;" width="16" height="17" viewBox="0 0 16 17"><defs><linearGradient id="g33" x1="0" y1="0" x2="0" y2="1"><stop offset="0" stop-color="#e3eefc"/><stop offset="1" stop-color="#a6c6ef"/></linearGradient></defs><rect x="0.5" y="0.5" width="15" height="16" rx="2" fill="url(#g33)" stroke="#5482bd"/><path d="M3 12H5M7 12H9M11 12H13" stroke="#14224a" stroke-width="2"/></svg>
<svg class="a" style="left:1038px;top:248px;" width="16" height="17" viewBox="0 0 16 17"><defs><linearGradient id="g34" x1="0" y1="0" x2="0" y2="1"><stop offset="0" stop-color="#e3eefc"/><stop offset="1" stop-color="#a6c6ef"/></linearGradient></defs><rect x="0.5" y="0.5" width="15" height="16" rx="2" fill="url(#g34)" stroke="#7d8da3"/><rect x="3.5" y="4.5" width="9" height="7.5" fill="#f4f6fa" stroke="#6f7f98" stroke-width=".9"/><rect x="4" y="5" width="8" height="2" fill="#8a9cb8"/><path d="M5.4 9.4H10.6" stroke="#9aa6b8" stroke-width="1"/></svg>
<span class="t" style="left:834.5px;top:274px;letter-spacing:0.29px;">Ambar</span>
<div class="a" style="left:896px;top:270px;width:158px;height:19px;border:1px solid #7a7a7a;background:#fff"></div>
<span class="t" style="left:902px;top:274px;letter-spacing:-0.27px;">Merkez</span>
<svg class="a" style="left:1021px;top:272px;" width="16" height="17" viewBox="0 0 16 17"><defs><linearGradient id="g35" x1="0" y1="0" x2="0" y2="1"><stop offset="0" stop-color="#e3eefc"/><stop offset="1" stop-color="#a6c6ef"/></linearGradient></defs><rect x="0.5" y="0.5" width="15" height="16" rx="2" fill="url(#g35)" stroke="#5482bd"/><path d="M3 12H5M7 12H9M11 12H13" stroke="#14224a" stroke-width="2"/></svg>
<svg class="a" style="left:1038px;top:272px;" width="16" height="17" viewBox="0 0 16 17"><defs><linearGradient id="g36" x1="0" y1="0" x2="0" y2="1"><stop offset="0" stop-color="#e3eefc"/><stop offset="1" stop-color="#a6c6ef"/></linearGradient></defs><rect x="0.5" y="0.5" width="15" height="16" rx="2" fill="url(#g36)" stroke="#7d8da3"/><rect x="3.5" y="4.5" width="9" height="7.5" fill="#f4f6fa" stroke="#6f7f98" stroke-width=".9"/><rect x="4" y="5" width="8" height="2" fill="#8a9cb8"/><path d="M5.4 9.4H10.6" stroke="#9aa6b8" stroke-width="1"/></svg>
<span class="t" style="left:834.5px;top:298px;">Org. Birim</span>
<div class="a" style="left:896px;top:294px;width:158px;height:19px;border:1px solid #2f7fd0;background:#fff"></div>
<div class="a" style="left:902px;top:298px;width:1px;height:14px;background:#000;"></div>
<svg class="a" style="left:1021px;top:296px;" width="16" height="17" viewBox="0 0 16 17"><defs><linearGradient id="g37" x1="0" y1="0" x2="0" y2="1"><stop offset="0" stop-color="#e3eefc"/><stop offset="1" stop-color="#a6c6ef"/></linearGradient></defs><rect x="0.5" y="0.5" width="15" height="16" rx="2" fill="url(#g37)" stroke="#5482bd"/><path d="M3 12H5M7 12H9M11 12H13" stroke="#14224a" stroke-width="2"/></svg>
<svg class="a" style="left:1038px;top:296px;" width="16" height="17" viewBox="0 0 16 17"><defs><linearGradient id="g38" x1="0" y1="0" x2="0" y2="1"><stop offset="0" stop-color="#e3eefc"/><stop offset="1" stop-color="#a6c6ef"/></linearGradient></defs><rect x="0.5" y="0.5" width="15" height="16" rx="2" fill="#ffffff" stroke="#7d8da3"/><rect x="3.5" y="4.5" width="9" height="7.5" fill="#f4f6fa" stroke="#6f7f98" stroke-width=".9"/><rect x="4" y="5" width="8" height="2" fill="#8a9cb8"/><path d="M5.4 9.4H10.6" stroke="#9aa6b8" stroke-width="1"/></svg>
<span class="t" style="left:1072px;top:233px;">Kayıt Durumu</span>
<div class="a" style="left:1153px;top:228px;width:118px;height:21px;border:1px solid #a8a8a8;background:#fff"></div>
<div class="a" style="left:1254px;top:229px;width:18px;height:21px;background:#e3e3e3;"></div>
<span class="t" style="left:1157.5px;top:233px;letter-spacing:0.21px;">Yürütülüyor</span>
<svg class="a" style="left:1258px;top:236px;" width="12" height="8" viewBox="0 0 12 8"><path d="M1.2 1.4L6 6L10.8 1.4" stroke="#444" stroke-width="1" fill="none"/></svg>
<div class="a" style="left:328px;top:336px;width:950px;height:24px;border:1px solid #a6a6a6;border-bottom:none;border-radius:3px 3px 0 0;background:#f0f0f0"></div>
<div class="a" style="left:328px;top:359px;width:950px;height:266px;border:1px solid #a6a6a6;background:#fff"></div>
<div class="a" style="left:328px;top:336px;width:113px;height:22px;background:#fbfbfb;border-left:1px solid #a6a6a6;border-right:1px solid #a6a6a6;border-top:3px solid #6b6b6b;border-radius:2px 2px 0 0"></div>
<div class="a" style="left:329px;top:359px;width:113px;height:1px;background:#fdfdfd;"></div>
<span class="t" style="left:335.5px;top:342px;letter-spacing:-0.28px;">Düzenleme Satırları</span>
<div class="a" style="left:334px;top:362px;width:902px;height:23px;background:linear-gradient(#eaf2fd 0,#c9defb 8px,#b4d1fa 8.5px,#b4d1fa 100%)"></div>
<div class="a" style="left:365px;top:362px;width:1px;height:23px;background:linear-gradient(rgba(255,255,255,.7),rgba(150,175,215,.5))"></div>
<div class="a" style="left:525px;top:362px;width:1px;height:23px;background:linear-gradient(rgba(255,255,255,.7),rgba(150,175,215,.5))"></div>
<div class="a" style="left:645px;top:362px;width:1px;height:23px;background:linear-gradient(rgba(255,255,255,.7),rgba(150,175,215,.5))"></div>
<div class="a" style="left:765px;top:362px;width:1px;height:23px;background:linear-gradient(rgba(255,255,255,.7),rgba(150,175,215,.5))"></div>
<div class="a" style="left:885px;top:362px;width:1px;height:23px;background:linear-gradient(rgba(255,255,255,.7),rgba(150,175,215,.5))"></div>
<div class="a" style="left:965px;top:362px;width:1px;height:23px;background:linear-gradient(rgba(255,255,255,.7),rgba(150,175,215,.5))"></div>
<div class="a" style="left:1105px;top:362px;width:1px;height:23px;background:linear-gradient(rgba(255,255,255,.7),rgba(150,175,215,.5))"></div>
<div class="a" style="left:1225px;top:362px;width:1px;height:23px;background:linear-gradient(rgba(255,255,255,.7),rgba(150,175,215,.5))"></div>
<span class="t b" style="left:369.5px;top:366px;letter-spacing:-0.24px;">Satır Öğesi</span>
<span class="t b" style="left:530px;top:366px;letter-spacing:-0.27px;">Kaynak Fatura Satırı</span>
<span class="t b" style="left:650px;top:366px;letter-spacing:-0.29px;">DİİB Fiş Satırı</span>
<span class="t b" style="left:770px;top:366px;letter-spacing:0.10px;">Birim/Paket</span>
<span class="t b" style="right:322px;top:366px;letter-spacing:0.33px;">Miktar</span>
<span class="t b" style="right:182px;top:366px;letter-spacing:-0.25px;">Birim Fiyat</span>
<span class="t b" style="right:61.5px;top:366px;letter-spacing:-0.41px;">CIF Birim Fiyat</span>
<div class="a" style="left:334px;top:385px;width:32px;height:46px;background:#dfe9fb;"></div>
<div class="a" style="left:366px;top:408px;width:870px;height:23px;background:#e3ebfb;"></div>
<div class="a" style="left:366px;top:385px;width:160px;height:22px;background:#5896cb;"></div>
<div class="a" style="left:334px;top:407px;width:902px;height:1px;background:#eef2fa;"></div>
<div class="a" style="left:525px;top:385px;width:1px;height:46px;background:#dde4ee;"></div>
<div class="a" style="left:645px;top:385px;width:1px;height:46px;background:#dde4ee;"></div>
<div class="a" style="left:765px;top:385px;width:1px;height:46px;background:#dde4ee;"></div>
<div class="a" style="left:885px;top:385px;width:1px;height:46px;background:#dde4ee;"></div>
<div class="a" style="left:965px;top:385px;width:1px;height:46px;background:#dde4ee;"></div>
<div class="a" style="left:1105px;top:385px;width:1px;height:46px;background:#dde4ee;"></div>
<div class="a" style="left:1225px;top:385px;width:1px;height:46px;background:#dde4ee;"></div>
<div class="a" style="left:365px;top:385px;width:1px;height:46px;background:#cfdaec;"></div>
<svg class="a" style="left:346px;top:390px;" width="8" height="12" viewBox="0 0 8 12"><path d="M0.4 0L7 5.8L0.4 11.6Z" fill="#000"/></svg>
<span class="t" style="left:345.5px;top:411.5px;color:#868686;">2</span>
<span class="t" style="left:372px;top:389px;color:#e6eff8;letter-spacing:-0.27px;">Plastik Hammadde [Plastik…</span>
<span class="t" style="left:530px;top:389px;letter-spacing:-0.55px;">1 - AFT20260000000</span>
<span class="t" style="left:633.5px;top:389px;">…</span>
<span class="t" style="left:650px;top:389px;letter-spacing:-0.55px;">0001 [3901.10.10.00.</span>
<span class="t" style="left:753px;top:389px;">…</span>
<span class="t" style="left:770px;top:389px;letter-spacing:-1.20px;">KG</span>
<span class="t" style="right:321.5px;top:389px;letter-spacing:-0.27px;">200</span>
<span class="t" style="right:181.5px;top:389px;letter-spacing:-0.45px;">2,40</span>
<span class="t" style="right:61px;top:389px;letter-spacing:-0.59px;">2,4</span>
<span class="t" style="left:372px;top:411.5px;letter-spacing:0.07px;">Metal Ayak [Metal Ayak]</span>
<span class="t" style="left:530px;top:411.5px;letter-spacing:-0.55px;">2 - AFT20260000000</span>
<span class="t" style="left:633.5px;top:411.5px;">…</span>
<span class="t" style="left:650px;top:411.5px;letter-spacing:-0.55px;">0002 [9403.99.10.00.</span>
<span class="t" style="left:753px;top:411.5px;">…</span>
<span class="t" style="left:770px;top:411.5px;letter-spacing:0.10px;">Adet</span>
<span class="t" style="right:321.5px;top:411.5px;letter-spacing:-0.27px;">100</span>
<span class="t" style="right:181.5px;top:411.5px;letter-spacing:-0.45px;">4,80</span>
<span class="t" style="right:61px;top:411.5px;letter-spacing:-0.59px;">4,8</span>
<div class="a" style="left:1236px;top:361px;width:17px;height:156px;background:#f0f0f0;"></div>
<svg class="a" style="left:1240px;top:368px;" width="10" height="7" viewBox="0 0 10 7"><path d="M1 5.6L5 1.6L9 5.6" stroke="#bdbdbd" stroke-width="1.9" fill="none"/></svg>
<svg class="a" style="left:1240px;top:504px;" width="10" height="7" viewBox="0 0 10 7"><path d="M1 1.4L5 5.4L9 1.4" stroke="#bdbdbd" stroke-width="1.9" fill="none"/></svg>
<div class="a" style="left:334px;top:517px;width:919px;height:15px;background:#f0f0f0;"></div>
<div class="a" style="left:351px;top:517px;width:341px;height:15px;background:#cdcdcd;"></div>
<svg class="a" style="left:338px;top:520px;" width="8" height="9" viewBox="0 0 8 9"><path d="M6.2 1L2 4.5L6.2 8" stroke="#505050" stroke-width="1.6" fill="none"/></svg>
<svg class="a" style="left:1224px;top:520px;" width="8" height="9" viewBox="0 0 8 9"><path d="M1.8 1L6 4.5L1.8 8" stroke="#505050" stroke-width="1.6" fill="none"/></svg>
<svg class="a" style="left:1259px;top:365px;" width="13" height="15" viewBox="0 0 13 15"><rect x="1.5" y="0.7" width="10" height="2.6" fill="#f4f4f4" stroke="#a3a3a3" stroke-width="1"/><path d="M6.5 5L10.6 9.2H8.4V13.6H4.6V9.2H2.4Z" fill="#fff" stroke="#a3a3a3" stroke-width="1"/></svg>
<svg class="a" style="left:1258px;top:387px;" width="14" height="13" viewBox="0 0 14 13"><path d="M6.4 1L2 5.6L6.4 10.2V7.6C8.6 7.6 10 8.4 11.2 10.4C11.2 6.6 9.4 4 6.4 3.8Z" fill="#fff" stroke="#a3a3a3" stroke-width="1" stroke-linejoin="round"/><rect x="0.5" y="9.6" width="3" height="3" fill="#a3a3a3"/><path d="M5 11.6H13" stroke="#a3a3a3" stroke-width="1"/></svg>
<svg class="a" style="left:1258px;top:411px;" width="14" height="13" viewBox="0 0 14 13"><rect x="0.6" y="0.6" width="2.6" height="2.6" fill="#6a78b8" stroke="#3c4a8c" stroke-width=".8"/><path d="M4.6 1.6H12.4" stroke="#55608c" stroke-width="1"/><path d="M12 3.4C12.6 7 10.6 9 7.6 9.2V11.8L2.4 7.6L7.6 3.6V6C9.4 6 11 5.2 12 3.4Z" fill="#f6c544" stroke="#c28a14" stroke-width=".9" stroke-linejoin="round"/></svg>
<svg class="a" style="left:1259px;top:432px;" width="13" height="15" viewBox="0 0 13 15"><path d="M4.4 0.8H8.6V5H11.2L6.5 10L1.8 5H4.4Z" fill="#f7c748" stroke="#c28a14" stroke-width=".9" stroke-linejoin="round"/><rect x="1.2" y="11.2" width="10.6" height="2.8" rx="1" fill="#9cc0ec" stroke="#4a78bc" stroke-width=".9"/></svg>
<div class="a" style="left:1256px;top:452px;width:19px;height:1px;background:#8a8a8a;"></div>
<svg class="a" style="left:1257px;top:460px;" width="17" height="18" viewBox="0 0 17 18"><path d="M6.5 4.5H13L16 7.5V17H6.5Z" fill="#fbfaf4" stroke="#b89a5c" stroke-width=".9"/><path d="M10 9.4H14.4M10 11.4H14.4M10 13.4H14.4" stroke="#6f9ad2" stroke-width=".8"/><rect x="0.8" y="0.8" width="9.4" height="7.6" fill="#9fc2ea" stroke="#3f6fb4" stroke-width=".9"/><path d="M2.4 2.6H3.6M4.8 2.6H6M7.2 2.6H8.4" stroke="#fff" stroke-width="1.1"/><path d="M2.6 7.6C3 11.4 5.6 12.6 8 12.4V14.6L12.6 11L8 7.6V9.6C6.4 9.6 5.4 9 5 7.6Z" fill="#5fa0d8" stroke="#2f6cae" stroke-width=".8" stroke-linejoin="round"/></svg>
<div class="a" style="left:1256px;top:482px;width:19px;height:1px;background:#8a8a8a;"></div>
<svg class="a" style="left:1258px;top:492px;" width="15" height="14" viewBox="0 0 15 14"><defs><linearGradient id="g39" x1="0" y1="0" x2="0" y2="1"><stop offset="0" stop-color="#f06a6e"/><stop offset="1" stop-color="#d4242c"/></linearGradient></defs><path d="M3.2 1.2L7.5 4.8L11.8 1.2L14 3.6L10.2 7L14 10.6L11.8 13L7.5 9.4L3.2 13L1 10.6L4.8 7L1 3.6Z" fill="url(#g39)" stroke="#c8222a" stroke-width=".6" stroke-linejoin="round"/></svg>
<div class="a" style="left:338px;top:556px;width:433px;height:1px;background:#a6a6a6;"></div>
<div class="a" style="left:337px;top:534px;width:36px;height:20px;background:#fff;border-left:1px solid #a6a6a6;border-right:1px solid #a6a6a6;border-top:3px solid #6b6b6b;border-radius:2px 2px 0 0"></div>
<div class="a" style="left:425px;top:535px;width:1px;height:21px;background:#a6a6a6;"></div>
<span class="t" style="left:344px;top:539px;letter-spacing:-0.28px;">Özet</span>
<span class="t" style="left:382.5px;top:539px;letter-spacing:-0.31px;">Barkod</span>
<span class="t" style="left:342.5px;top:560px;letter-spacing:-0.12px;">Eldeki Toplam</span>
<div class="a" style="left:455px;top:559px;width:90px;height:15px;background:#eeeeee;"></div>
<span class="t" style="left:342.5px;top:578px;letter-spacing:-0.25px;">Satınalma Siparişleri</span>
<div class="a" style="left:455px;top:577px;width:90px;height:15px;background:#eeeeee;"></div>
<span class="t" style="left:342.5px;top:596px;letter-spacing:0.15px;">Ambar Miktar</span>
<div class="a" style="left:455px;top:595px;width:90px;height:15px;background:#eeeeee;"></div>
<span class="t" style="left:553px;top:560px;letter-spacing:-0.12px;">Yoldaki Ürün Giriş</span>
<div class="a" style="left:654px;top:559px;width:90px;height:15px;background:#eeeeee;"></div>
<span class="t" style="left:553px;top:578px;letter-spacing:-0.34px;">Satış Siparişleri</span>
<div class="a" style="left:654px;top:577px;width:90px;height:15px;background:#eeeeee;"></div>
<span class="t" style="left:752px;top:560px;letter-spacing:-1.17px;">Rez</span>
<span class="t" style="left:752px;top:578px;letter-spacing:1.00px;">Am</span>
<span class="t" style="left:780.5px;top:536px;letter-spacing:-0.06px;">Toplam Ürün Tutarı</span>
<div class="a" style="left:889px;top:535px;width:120px;height:15px;background:#eeeeee;"></div>
<span class="t b" style="right:278.5px;top:536px;letter-spacing:0.39px;">42.473,76 <span style="display:inline-block;transform:scaleX(.8);transform-origin:100% 50%;margin-left:-2px;letter-spacing:0">₺</span></span>
<span class="t" style="left:780.5px;top:554px;letter-spacing:-0.16px;">Gümrük Vergisi</span>
<div class="a" style="left:889px;top:553px;width:120px;height:15px;background:#eeeeee;"></div>
<span class="t b" style="right:278.5px;top:554px;letter-spacing:0.79px;">0,00 <span style="display:inline-block;transform:scaleX(.8);transform-origin:100% 50%;margin-left:-2px;letter-spacing:0">₺</span></span>
<span class="t" style="left:780.5px;top:572px;letter-spacing:-0.30px;">Toplam KDV</span>
<div class="a" style="left:889px;top:571px;width:120px;height:15px;background:#eeeeee;"></div>
<span class="t b" style="right:278.5px;top:572px;letter-spacing:0.39px;">42.473,76 <span style="display:inline-block;transform:scaleX(.8);transform-origin:100% 50%;margin-left:-2px;letter-spacing:0">₺</span></span>
<span class="t" style="left:780.5px;top:590px;">Tutar</span>
<div class="a" style="left:889px;top:589px;width:120px;height:15px;background:#eeeeee;"></div>
<span class="t b" style="right:278.5px;top:590px;letter-spacing:0.39px;">89.947,52 <span style="display:inline-block;transform:scaleX(.8);transform-origin:100% 50%;margin-left:-2px;letter-spacing:0">₺</span></span>
<span class="t" style="left:780.5px;top:608px;letter-spacing:-0.64px;">Satır Sayısı</span>
<div class="a" style="left:889px;top:607px;width:120px;height:15px;background:#eeeeee;"></div>
<span class="t b" style="right:278.5px;top:608px;">2</span>
<span class="t" style="left:1017.5px;top:536px;letter-spacing:0.03px;">Ek Mali Yükümlülük</span>
<div class="a" style="left:1133px;top:535px;width:120px;height:15px;background:#eeeeee;"></div>
<span class="t b" style="right:34.5px;top:536px;letter-spacing:0.79px;">0,00 <span style="display:inline-block;transform:scaleX(.8);transform-origin:100% 50%;margin-left:-2px;letter-spacing:0">₺</span></span>
<span class="t" style="left:1017.5px;top:554px;letter-spacing:-0.22px;">İlave Gümrük Vergisi</span>
<div class="a" style="left:1133px;top:553px;width:120px;height:15px;background:#eeeeee;"></div>
<span class="t b" style="right:34.5px;top:554px;letter-spacing:0.79px;">0,00 <span style="display:inline-block;transform:scaleX(.8);transform-origin:100% 50%;margin-left:-2px;letter-spacing:0">₺</span></span>
<span class="t" style="left:1017.5px;top:572px;letter-spacing:-0.22px;">İndirilemeyecek KDV</span>
<div class="a" style="left:1133px;top:571px;width:120px;height:15px;background:#eeeeee;"></div>
<span class="t b" style="right:34.5px;top:572px;letter-spacing:0.79px;">0,00 <span style="display:inline-block;transform:scaleX(.8);transform-origin:100% 50%;margin-left:-2px;letter-spacing:0">₺</span></span>
<span class="t" style="left:1017.5px;top:590px;letter-spacing:-0.12px;">Vergiler Toplamı</span>
<div class="a" style="left:1133px;top:589px;width:120px;height:15px;background:#eeeeee;"></div>
<span class="t b" style="right:34.5px;top:590px;letter-spacing:0.39px;">47.473,76 <span style="display:inline-block;transform:scaleX(.8);transform-origin:100% 50%;margin-left:-2px;letter-spacing:0">₺</span></span>
</body>
</html>
